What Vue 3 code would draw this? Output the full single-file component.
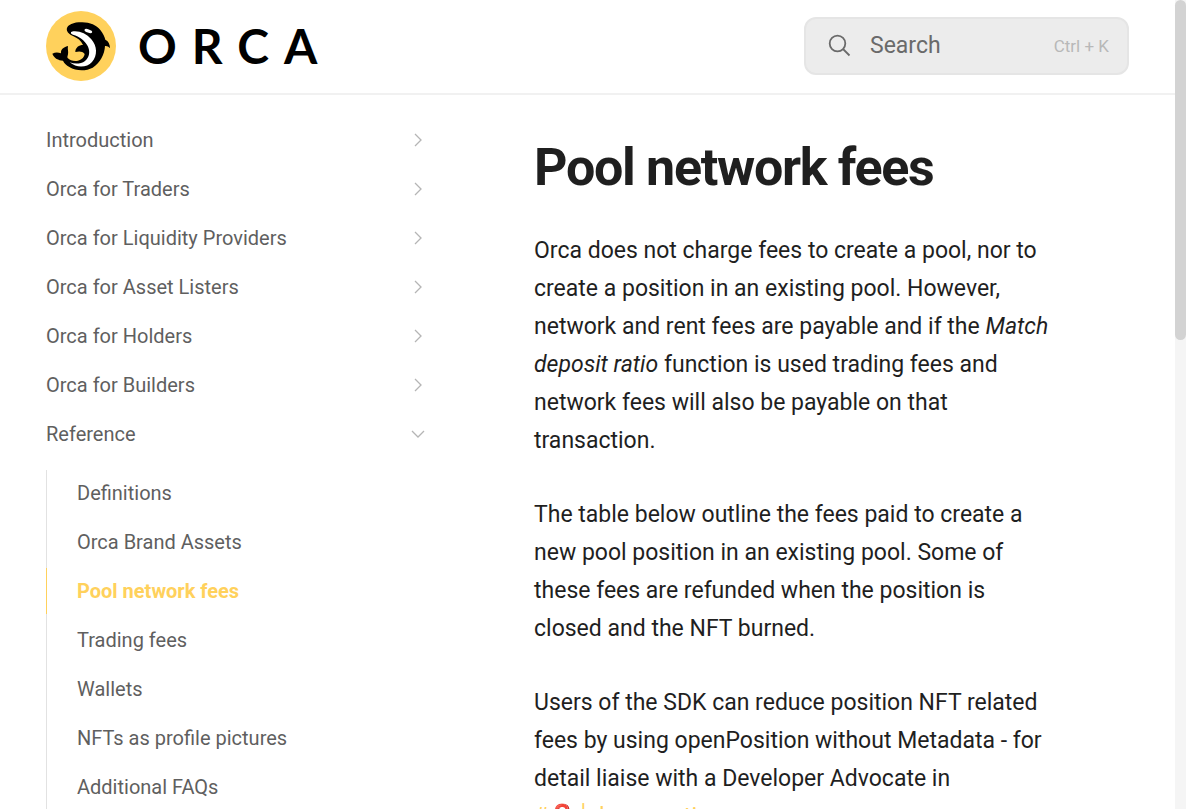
<script setup>
import { ref } from 'vue'

const query = ref('')
const sections = [
  'Introduction',
  'Orca for Traders',
  'Orca for Liquidity Providers',
  'Orca for Asset Listers',
  'Orca for Holders',
  'Orca for Builders',
]
const pages = [
  'Definitions',
  'Orca Brand Assets',
  'Pool network fees',
  'Trading fees',
  'Wallets',
  'NFTs as profile pictures',
  'Additional FAQs',
]
const current = 'Pool network fees'
</script>

<template>
  <div class="viewport">
    <div class="site">
      <header class="topbar">
        <a class="brand" href="#" aria-label="Orca home">
          <svg class="whale" viewBox="6 5 210 210" aria-hidden="true">
            <circle cx="111" cy="110" r="105" fill="#ffd15c" />
            <path
              d="M69 64C65 50 82 41 104 39C132 36 156 45 169 62C178 74 182 82 184 91C193 95 198 104 198 117C193 111 188 109 183 110C182 134 168 162 146 175C125 186 96 185 76 173C67 168 61 162 57 154C43 153 31 147 25 133C34 128 43 129 51 132C50 121 57 114 72 110C70 119 74 127 72 135C71 141 69 143 71 146C78 153 90 157 102 154C115 150 121 143 122 134C115 126 107 125 94 128C94 115 105 107 117 107C111 94 101 86 87 80C78 76 72 71 69 64Z"
              fill="#000"
            />
            <path
              d="M83 67C104 63 126 72 142 90C160 111 161 139 144 158C129 175 98 177 77 159C92 165 111 164 123 155C137 143 139 126 131 110C122 93 107 82 87 76C80 73 79 69 83 67Z"
              fill="#fff"
            />
            <ellipse cx="133" cy="65" rx="12" ry="5" transform="rotate(18 133 65)" fill="#fff" />
          </svg>
          <span class="wordmark">ORCA</span>
        </a>
        <label class="search">
          <svg class="lens" viewBox="0 0 24 24" aria-hidden="true">
            <circle cx="9.5" cy="9.5" r="7.8" />
            <path d="M15 15L21.5 21.5" />
          </svg>
          <input v-model="query" type="text" placeholder="Search" aria-label="Search" />
          <span class="shortcut">Ctrl + K</span>
        </label>
      </header>

      <div class="columns">
        <nav class="sidebar" aria-label="Documentation">
          <a v-for="name in sections" :key="name" class="item" href="#">
            {{ name }}
            <svg class="chevron" viewBox="0 0 16 16" aria-hidden="true"><path d="M5 2L11 8L5 14" /></svg>
          </a>
          <a class="item" href="#" aria-expanded="true">
            Reference
            <svg class="chevron" viewBox="0 0 16 16" aria-hidden="true"><path d="M2 5L8 11L14 5" /></svg>
          </a>
          <div class="group">
            <a
              v-for="name in pages"
              :key="name"
              class="item"
              :class="{ active: name === current }"
              href="#"
            >{{ name }}</a>
          </div>
        </nav>

        <main class="article">
          <h1>Pool network fees</h1>
          <p>
            Orca does not charge fees to create a pool, nor to create a position in an existing
            pool. However, network and rent fees are payable and if the <em>Match deposit ratio</em>
            function is used trading fees and network fees will also be payable on that transaction.
          </p>
          <p>
            The table below outline the fees paid to create a new pool position in an existing pool.
            Some of these fees are refunded when the position is closed and the NFT burned.
          </p>
          <p>
            Users of the SDK can reduce position NFT related fees by using openPosition without
            Metadata - for detail liaise with a Developer Advocate in
            <a class="channel" href="#">#❓│dev-questions</a>
          </p>
        </main>
      </div>
    </div>
    <div class="track" aria-hidden="true"><div class="thumb"></div></div>
  </div>
</template>

<style>
body {
  margin: 0;
  overflow: hidden;
}
</style>

<style scoped>
.viewport {
  display: flex;
  height: 100vh;
  overflow: hidden;
  background: #fff;
  color: #1f1f1f;
  font-family: Roboto, "Liberation Sans", sans-serif;
}
a {
  color: inherit;
  text-decoration: none;
}
.site {
  flex: 1;
  min-width: 0;
}
.topbar {
  display: flex;
  align-items: center;
  justify-content: space-between;
  padding: 11px 46px 12px;
  border-bottom: 2px solid #f1f1f1;
}
.brand {
  display: flex;
  align-items: center;
  gap: 22px;
}
.whale {
  width: 70px;
  height: 70px;
}
.wordmark {
  color: #000;
  font: 700 48px/58px Lato, sans-serif;
  letter-spacing: 15px;
}
.search {
  display: flex;
  align-items: center;
  gap: 18px;
  width: 325px;
  height: 58px;
  padding: 0 18px 0 22px;
  border: 2px solid #e5e5e5;
  border-radius: 12px;
  box-sizing: border-box;
  background: #ececec;
}
.lens {
  flex: none;
  width: 24px;
  height: 24px;
  fill: none;
  stroke: #6a6a6a;
  stroke-width: 1.8;
}
.search input {
  flex: 1;
  min-width: 0;
  padding: 0;
  border: 0;
  outline: 0;
  background: none;
  color: #6a6a6a;
  font: 23px/34px Roboto, sans-serif;
}
.search input::placeholder {
  color: #6a6a6a;
  opacity: 1;
}
.shortcut {
  color: #b8b8b8;
  font-size: 17px;
}
.columns {
  display: flex;
  gap: 106px;
  padding: 0 120px 0 46px;
}
.sidebar {
  flex: none;
  display: flex;
  flex-direction: column;
  gap: 3px;
  width: 382px;
  padding-top: 22px;
}
.item {
  display: flex;
  align-items: center;
  justify-content: space-between;
  height: 46px;
  padding-right: 2px;
  color: #5f5f5f;
  font-size: 20px;
}
.chevron {
  width: 16px;
  height: 16px;
  fill: none;
  stroke: #b5b5b5;
  stroke-width: 1.3;
}
.group {
  display: flex;
  flex-direction: column;
  gap: 3px;
  margin-top: 10px;
  box-shadow: inset 1px 0 #e2e2e2;
}
.group .item {
  padding-left: 30px;
  border-left: 1px solid transparent;
}
.group .active {
  border-color: #ffd15c;
  color: #ffd15c;
  font-weight: 700;
}
.article {
  flex: 1;
  min-width: 0;
  padding-top: 41px;
}
h1 {
  margin: 0 0 32px;
  font-size: 52px;
  line-height: 64px;
  font-weight: 700;
  letter-spacing: -0.025em;
}
p {
  margin: 0 0 36px;
  font-size: 23px;
  line-height: 38px;
}
.channel {
  display: inline-block;
  color: #ffd15c;
}
.track {
  flex: none;
  width: 11px;
  background: #f5f5f5;
}
.thumb {
  height: 42%;
  border-radius: 6px;
  background: #d3d3d3;
}
</style>
